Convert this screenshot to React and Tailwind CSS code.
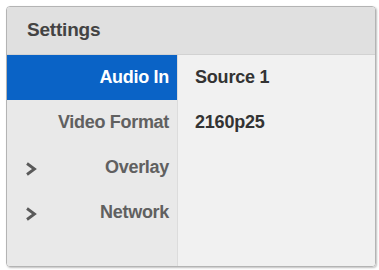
import React from 'react';

const Chevron = () => (
  <svg width="12" height="14" viewBox="0 0 12 14" className="shrink-0 mt-[3px]">
    <path d="M2 1.5 L9.5 7 L2 12.5" fill="none" stroke="#5a5a5a" strokeWidth="2.8" />
  </svg>
);

const menu = [
  { label: 'Audio In', active: true },
  { label: 'Video Format' },
  { label: 'Overlay', expandable: true },
  { label: 'Network', expandable: true },
];

const values = ['Source 1', '2160p25'];

export default function App() {
  return (
    <div className="w-[379px] h-[270px] bg-white pt-[6px] pl-[6px]" style={{ fontFamily: '"Liberation Sans", Arial, sans-serif' }}>
      <div className="w-[370px] h-[261px] flex flex-col rounded-[4px] border border-[#b4b4b4] overflow-hidden shadow-[1px_1px_2px_rgba(0,0,0,0.25)]">
        <div className="h-[48px] shrink-0 flex items-center pl-[20px] bg-[#e0e0e0] border-b border-[#d2d2d2]">
          <span className="text-[19px] font-bold text-[#434343] tracking-[-0.2px]">Settings</span>
        </div>
        <div className="flex flex-1">
          <div className="w-[171px] shrink-0 bg-[#e9e9e9] border-r border-[#dcdcdc] flex flex-col">
            {menu.map((item) => (
              <div
                key={item.label}
                className={`h-[45px] flex items-center pr-[8px] pl-[18px] ${item.active ? 'bg-[#0a63c6]' : ''}`}
              >
                {item.expandable && <Chevron />}
                <span className={`ml-auto text-[18px] font-bold tracking-[-0.3px] ${item.active ? 'text-white' : 'text-[#606060]'}`}>
                  {item.label}
                </span>
              </div>
            ))}
          </div>
          <div className="flex-1 bg-[#f1f1f1] flex flex-col pl-[17px]">
            {values.map((v) => (
              <div key={v} className="h-[45px] flex items-center">
                <span className="text-[18px] font-bold text-[#333333] tracking-[-0.2px]">{v}</span>
              </div>
            ))}
          </div>
        </div>
      </div>
    </div>
  );
}
